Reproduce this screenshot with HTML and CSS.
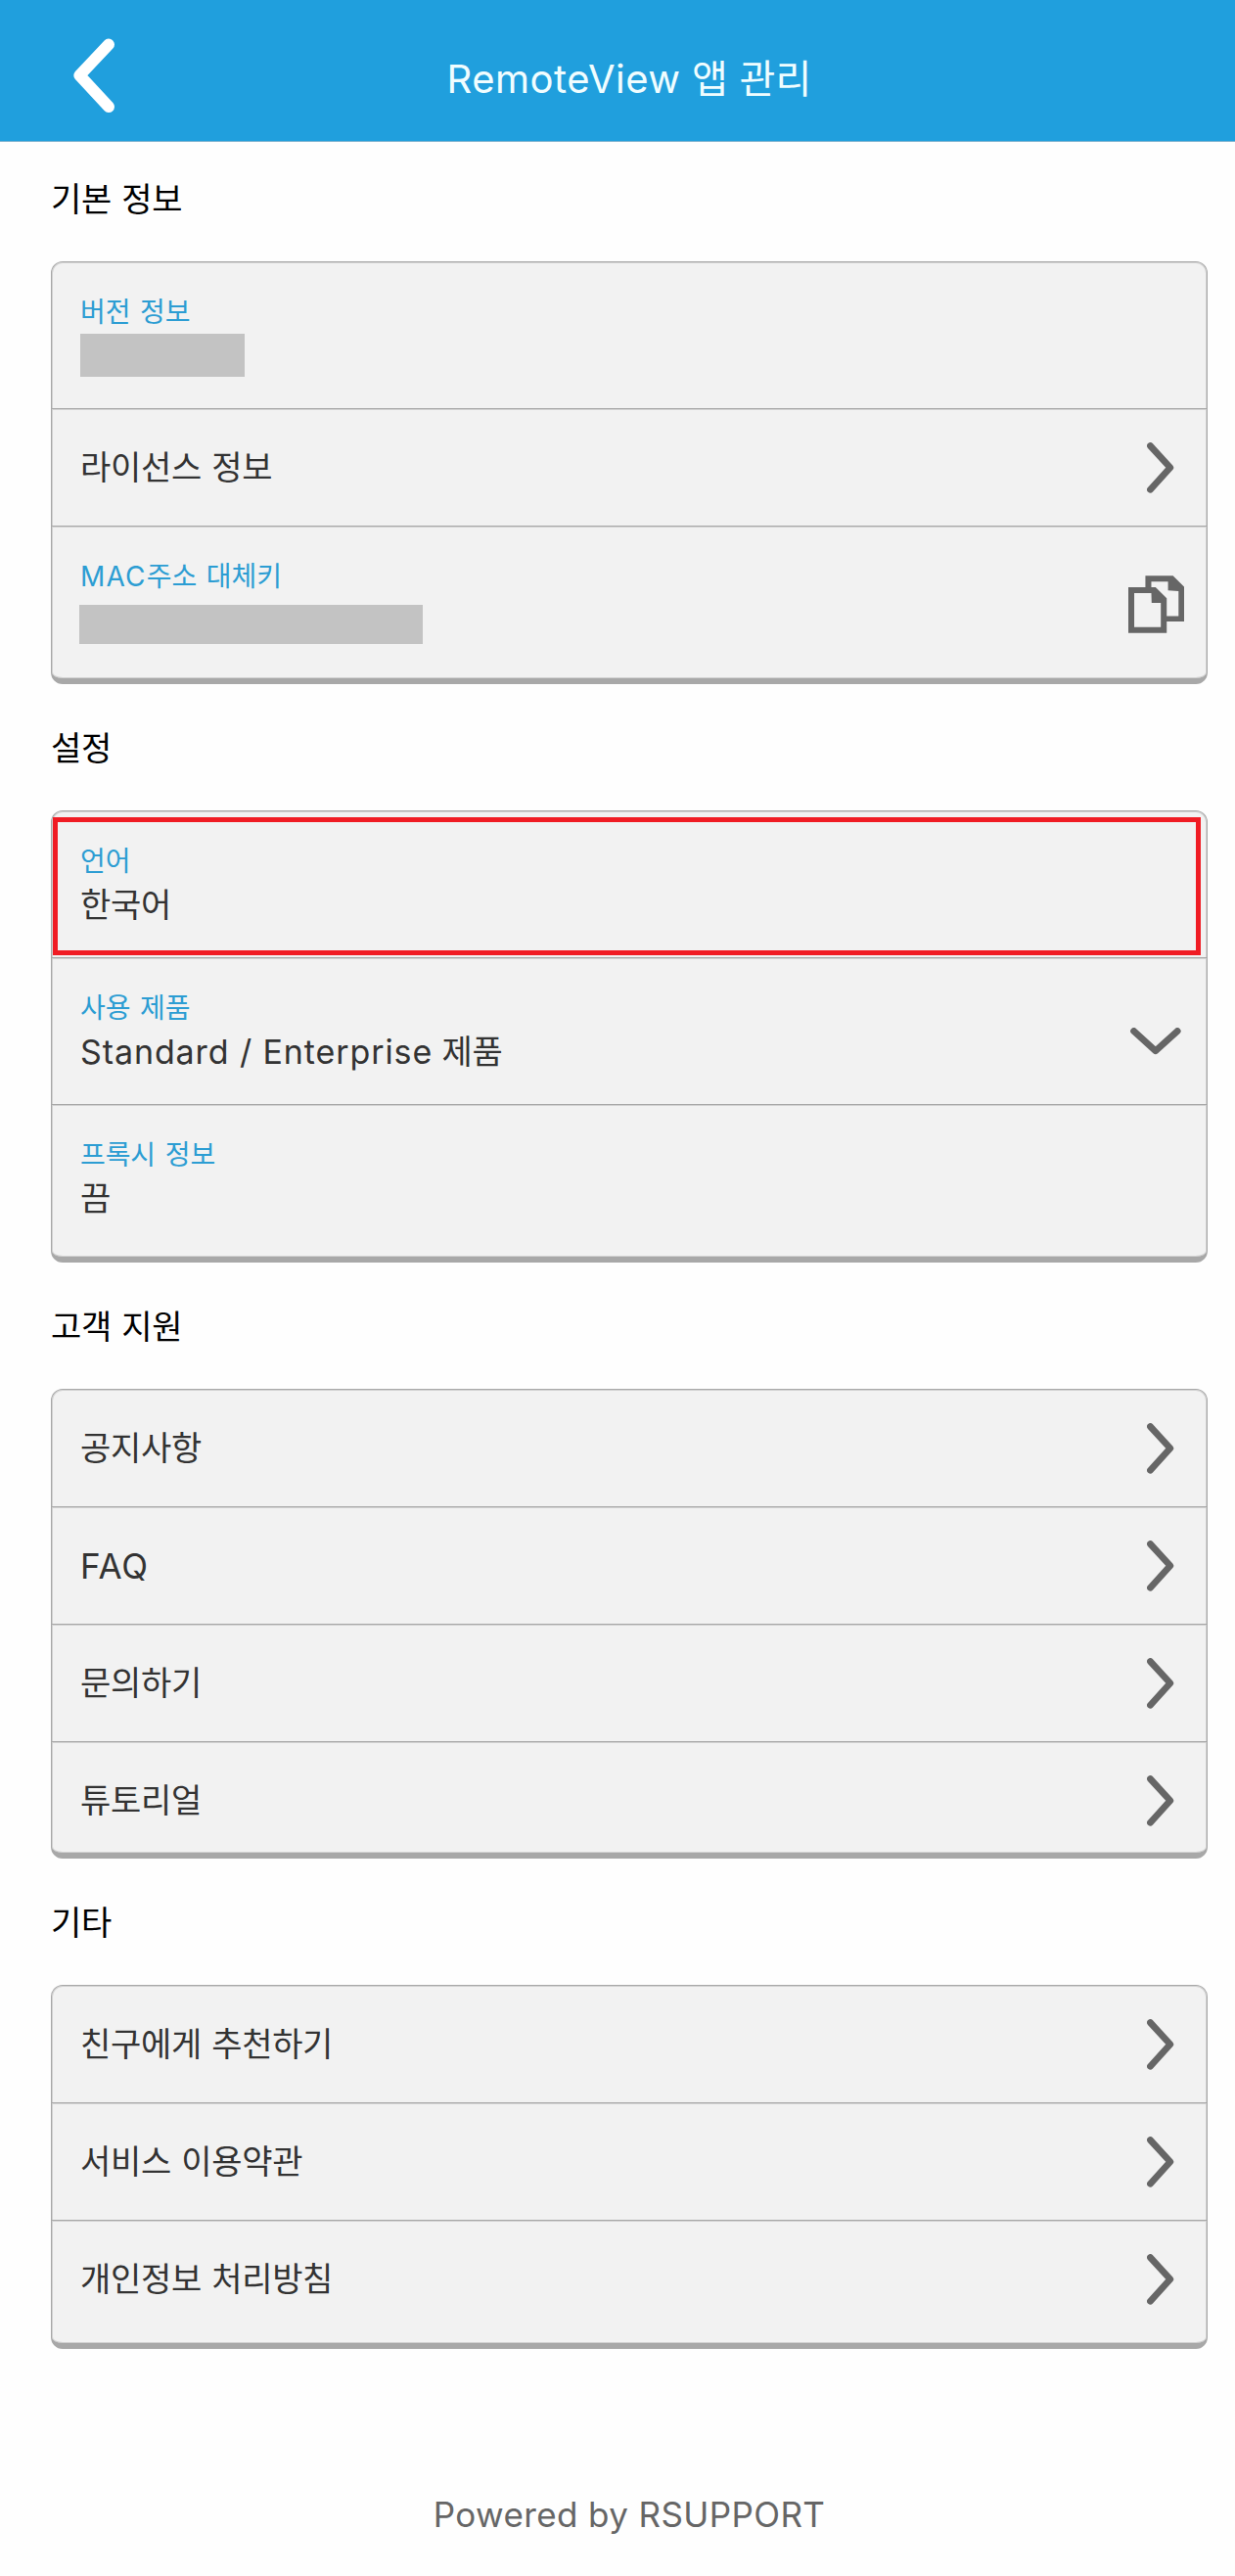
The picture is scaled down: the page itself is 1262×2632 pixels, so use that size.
FILE: index.html
```html
<!DOCTYPE html>
<html lang="ko">
<head>
    <meta charset="UTF-8">
    <meta name="viewport" content="width=device-width, initial-scale=1.0">
    <title>RemoteView 앱 관리</title>
    <link rel="stylesheet" href="styles.css">
</head>
<body>
    <!-- shared icon shapes -->
    <svg class="icon-defs">
        <symbol id="chevron" viewBox="0 0 28 52">
            <path d="M3.5 3.6 L23.8 25.8 L3.5 48.2" fill="none" stroke="#666" stroke-width="6.8" stroke-linecap="round" stroke-linejoin="round"/>
        </symbol>
    </svg>

    <header class="top-bar">
        <svg class="back-icon" viewBox="0 0 44 78">
            <path d="M37 7.5 L7.3 39 L37 71" fill="none" stroke="#fff" stroke-width="12" stroke-linecap="round" stroke-linejoin="round"/>
        </svg>
        <h1 class="title"><span class="latin">RemoteView</span> 앱 관리</h1>
    </header>

    <main class="content">
        <h2>기본 정보</h2>
        <ul class="card">
            <li class="row tall">
                <div class="label">버전 정보</div>
                <div class="masked masked-version"></div>
            </li>
            <li class="row">
                <span class="name">라이선스 정보</span>
                <svg class="chevron"><use href="#chevron"/></svg>
            </li>
            <li class="row tall">
                <div class="label"><span class="latin">MAC</span>주소 대체키</div>
                <div class="masked masked-mac"></div>
                <svg class="copy-icon" viewBox="0 0 170 175">
                    <path fill="#666" fill-rule="evenodd" d="M0 35 H52 V0 H136 L170 34 V140 H117 V175 H0 Z
                        M18 53 V157 H99 V83 H71 L70 53 Z
                        M70 18 V35 H83 L117 69 V123 H153 V47 L121 45 V18 Z"/>
                </svg>
            </li>
        </ul>

        <h2>설정</h2>
        <ul class="card">
            <li class="row tall selected">
                <div class="label">언어</div>
                <div class="value">한국어</div>
            </li>
            <li class="row tall">
                <div class="label">사용 제품</div>
                <div class="value"><span class="latin">Standard / Enterprise</span> 제품</div>
                <svg class="chevron-down" viewBox="0 0 52 28">
                    <path d="M3.6 3.5 L25.8 23.8 L48.2 3.5" fill="none" stroke="#666" stroke-width="6.8" stroke-linecap="round" stroke-linejoin="round"/>
                </svg>
            </li>
            <li class="row tall">
                <div class="label">프록시 정보</div>
                <div class="value">끔</div>
            </li>
        </ul>

        <h2>고객 지원</h2>
        <ul class="card support">
            <li class="row"><span class="name">공지사항</span><svg class="chevron"><use href="#chevron"/></svg></li>
            <li class="row"><span class="latin faq">FAQ</span><svg class="chevron"><use href="#chevron"/></svg></li>
            <li class="row"><span class="name">문의하기</span><svg class="chevron"><use href="#chevron"/></svg></li>
            <li class="row"><span class="name">튜토리얼</span><svg class="chevron"><use href="#chevron"/></svg></li>
        </ul>

        <h2>기타</h2>
        <ul class="card">
            <li class="row"><span class="name">친구에게 추천하기</span><svg class="chevron"><use href="#chevron"/></svg></li>
            <li class="row"><span class="name">서비스 이용약관</span><svg class="chevron"><use href="#chevron"/></svg></li>
            <li class="row"><span class="name">개인정보 처리방침</span><svg class="chevron"><use href="#chevron"/></svg></li>
        </ul>
    </main>

    <footer class="footer">Powered by RSUPPORT</footer>
</body>
</html>
```

FILE: styles.css
```css
* {
    box-sizing: border-box;
}

body {
    margin: 0;
    background: #fefefe;
    color: #333;
    font-family: Inter, "Noto Sans CJK KR", sans-serif;
    font-size: 34px;
    letter-spacing: -0.3px;
}

.icon-defs {
    display: none;
}

/* Header */
.top-bar {
    display: flex;
    align-items: flex-start;
    height: 145px;
    background: #209fdd;
    border-bottom: 1px solid #7fb3cf;
}

.back-icon {
    width: 44px;
    height: 78px;
    margin: 38px 0 0 74px;
}

.title {
    flex: 1;
    margin: 51px 94px 0 0;
    color: #f0fdff;
    font-size: 40px;
    line-height: 60px;
    font-weight: 400;
    text-align: center;
    letter-spacing: 0.2px;
}

.title .latin {
    letter-spacing: 0.5px;
}

/* Sections */
.content {
    padding: 29px 28px 0 52px;
}

h2 {
    margin: 36px 0 33px;
    color: #000;
    font-size: 34px;
    line-height: 60px;
    font-weight: 400;
    word-spacing: 1px;
}

h2:first-child {
    margin-top: 0;
}

.card {
    margin: 0;
    padding: 0;
    list-style: none;
    background: #f2f2f2;
    border: 1px solid #a8a8a8;
    border-bottom-width: 6px;
    border-radius: 12px;
    box-shadow: inset 0 0 0 1px #d2d2d2;
}

.row {
    display: flex;
    align-items: center;
    justify-content: space-between;
    height: 120px;
    padding: 0 33px 0 29px;
    border-top: 1px solid #a8a8a8;
    box-shadow: inset 0 1px 0 #d2d2d2;
}

.row:first-child {
    height: 119px;
    border-top: none;
    box-shadow: none;
}

.row:last-child {
    height: 126px;
    padding-bottom: 6px;
}

.support .row:last-child {
    height: 114px;
    padding: 6px 33px 0 29px;
}

.name {
    padding-bottom: 5px;
    word-spacing: 1px;
}

/* Rows with a caption above the value */
.row.tall {
    position: relative;
    display: block;
    height: 150px;
    padding: 31px 29px 0;
}

.row.tall:first-child {
    height: 149px;
}

.row.tall:last-child {
    height: 156px;
}

.label {
    color: #2c9dd3;
    font-size: 28px;
    line-height: 40px;
    letter-spacing: -0.1px;
    word-spacing: 2px;
}

.value {
    line-height: 50px;
}

.latin {
    letter-spacing: 0.9px;
}

.label .latin {
    letter-spacing: 1.2px;
}

.faq {
    font-size: 35px;
}

.masked {
    background: #c3c3c3;
}

.masked-version {
    width: 168px;
    height: 44px;
    margin-top: 2px;
}

.masked-mac {
    width: 351px;
    height: 40px;
    margin: 9px 0 0 -1px;
}

/* Language row highlight */
.selected::after {
    content: "";
    position: absolute;
    top: 6px;
    left: 1px;
    right: 6px;
    box-sizing: border-box;
    height: 141px;
    border: 5px solid #f01c24;
}

/* Icons */
.chevron {
    width: 28px;
    height: 52px;
}

.chevron-down {
    position: absolute;
    top: 71px;
    right: 26px;
    width: 52px;
    height: 28px;
}

.copy-icon {
    position: absolute;
    top: 50px;
    right: 23px;
    width: 57px;
    height: 59px;
}

.footer {
    margin-top: 139px;
    padding: 0 28px 0 52px;
    color: #666;
    font-size: 35px;
    line-height: 60px;
    text-align: center;
    letter-spacing: 0.4px;
}
```
